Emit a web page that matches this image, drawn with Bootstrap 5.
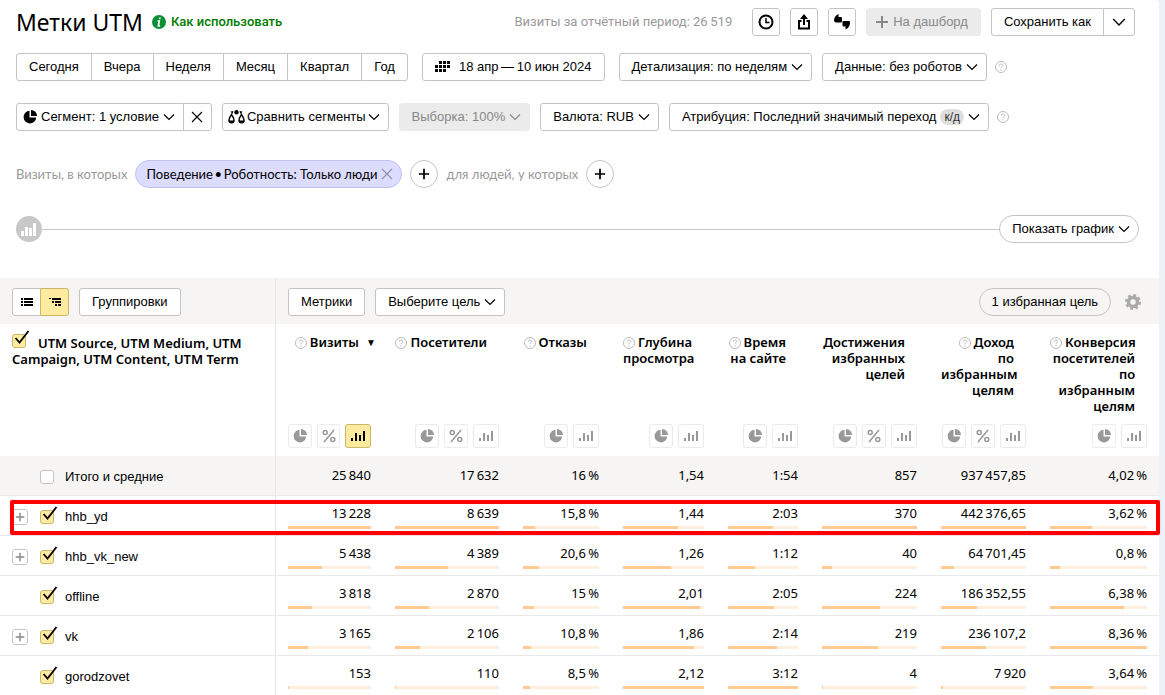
<!DOCTYPE html>
<html lang="ru">
<head>
<meta charset="utf-8">
<meta name="viewport" content="width=device-width, initial-scale=1">
<title>Метки UTM</title>
<link href="https://cdn.jsdelivr.net/npm/bootstrap@5.3.0/dist/css/bootstrap.min.css" rel="stylesheet">
<style>
  :root { --line: #c4c4c4; --pale: #f6f5f3; --yellow: #ffeba0; }
  body { font-family: "Noto Sans", sans-serif; font-size: 13px; line-height: 16px; color: #000; background: #eef1f7; padding-right: 6px; }
  .report { background: #fff; border-top-right-radius: 4px; }
  .report h1 { font-size: 23px; line-height: 28px; font-weight: 400; }
  .soft { font-family: Roboto, sans-serif; }
  .conditions { font-family: Lato, sans-serif; }
  .howto { color: #007a00; font-weight: 500; text-decoration: none; }
  .muted { color: #999; }
  .btn { --bs-btn-font-family: "Liberation Sans", sans-serif; --bs-btn-font-size: 13px; --bs-btn-line-height: 16px;
         --bs-btn-padding-x: 12px; --bs-btn-padding-y: 0; --bs-btn-border-radius: 3px; --bs-btn-border-color: var(--line);
         --bs-btn-bg: #fff; --bs-btn-color: #000; --bs-btn-active-bg: var(--yellow); --bs-btn-active-border-color: #cbb76c; --bs-btn-active-color: #000;
         --bs-btn-disabled-bg: #ebebeb; --bs-btn-disabled-border-color: #ebebeb; --bs-btn-disabled-color: #888; --bs-btn-disabled-opacity: 1;
         background: var(--bs-btn-bg); display: inline-flex; align-items: center; justify-content: center; height: 28px; white-space: nowrap; }
  .btn.caret { padding-right: 8px; gap: 4px; }
  .btn.lead-icon { padding-left: 6px; }
  .btn.compare { padding-left: 5px; gap: 2px; }
  .btn.square { width: 28px; padding: 0; }
  .btn.toggle { width: 29px; padding: 0; }
  .btn.round { border-radius: 14px; }
  .btn-group > .btn { flex: none; }
  .bar-gap { gap: 10px; }
  svg { display: block; flex: none; }
  .hint { color: #bbb; }
  .badge-kd { background: #dedede; color: #333; border-radius: 8px; font-size: 12px; line-height: 16px; padding: 0 4px; }
  .chip { background: #dcdcff; border: 1px solid #c3c1ef; border-radius: 14px; height: 28px; padding: 0 8px 0 10px; }
  .chip button { border: 0; background: none; padding: 0; color: #8f8fa8; }
  .chart-dot { width: 26px; height: 26px; border-radius: 50%; background: #c8c8c8; }
  .rule { height: 1px; background: #c8c8c8; }
  .grid { width: 100%; table-layout: fixed; border-collapse: separate; border-spacing: 0; }
  .grid th, .grid td { padding: 0 12px; vertical-align: top; }
  .grid th:first-child, .grid td:first-child { border-right: 1px solid #e6e6e6; text-align: left; }
  .tools > * { background: var(--pale); height: 46px; }
  .heads th { height: 132px; font-weight: 600; text-align: right; }
  .heads .in { height: 132px; padding: 10px 0 8px; }
  .heads .name { padding-right: 12px; white-space: nowrap; }
  .heads .tick { margin-right: 12px; }
  .name .hint { display: inline-block; vertical-align: -2px; margin-right: 3px; }
  .sorted { right: -5px; top: 0; font-size: 10px; }
  .mini { border: 1px solid #ebebeb; border-radius: 3px; background: #fff; color: #999; width: 24px; height: 24px; padding: 0; }
  .mini.wide { width: 26px; }
  .mini.on { background: var(--yellow); border-color: #cbb76c; color: #000; }
  .grid tbody td { height: 40px; border-bottom: 1px solid #e9e9e9; text-align: right; padding-top: 9px; }
  .grid tbody tr:last-child td { border-bottom: 0; height: 39px; }
  .grid tbody tr.total td { background: var(--pale); padding-top: 11px; }
  .grid tbody tr td:first-child, .grid tbody tr.total td:first-child { padding-top: 13px; font-family: "Liberation Sans", sans-serif; }
  .row-name { gap: 12px; }
  .row-name label { margin-left: -1px; }
  .plus { width: 16px; height: 16px; border: 1px solid #c4c4c4; border-radius: 3px; background: #fff; color: #888; padding: 0; }
  .tick { appearance: none; width: 14px; height: 14px; margin: 0; border: 1px solid #c4c4c4; border-radius: 3px; background: #fff; position: relative; flex: none; }
  .tick:checked { background: var(--yellow); border-color: #cbb76c; }
  .tick:checked::after { content: ""; position: absolute; left: 1px; top: -5px; width: 16px; height: 16px;
    background: url("data:image/svg+xml,%3Csvg xmlns='http://www.w3.org/2000/svg' viewBox='0 0 16 16'%3E%3Cpath d='M1.500 8 5.500 12.500 14.500 1' fill='none' stroke='%23000' stroke-width='1.800'/%3E%3C/svg%3E"); }
  .track { height: 3px; background: #ffefdf; margin-top: 5px; }
  .fill { height: 3px; min-width: 1px; background: #ffca94; }
  .marked { position: relative; }
  .marker { position: absolute; left: 10px; right: -1px; top: 4px; bottom: 1px; border: 4px solid #f00; border-radius: 2px; pointer-events: none; z-index: 2; box-shadow: 0 0 1px #f88; }
</style>
</head>
<body>
<svg width="0" height="0" class="position-absolute" aria-hidden="true">
  <symbol id="down" viewBox="0 0 12 12"><path d="M1 3.500 6 8.500l5-5" fill="none" stroke="currentColor" stroke-width="1.200"/></symbol>
  <symbol id="cross" viewBox="0 0 12 12"><path d="M1 1l10 10M11 1 1 11" fill="none" stroke="currentColor" stroke-width="1.100"/></symbol>
  <symbol id="add" viewBox="0 0 14 14"><path d="M7 1v12M1 7h12" stroke="currentColor" stroke-width="2"/></symbol>
  <symbol id="ask" viewBox="0 0 12 12"><circle cx="6" cy="6" r="5.500" fill="none" stroke="currentColor"/><path d="M4.300 4.800C4.300 2.400 7.700 2.500 7.700 4.600 7.700 5.800 6 5.800 6 7.200M6 8.200v1.200" fill="none" stroke="currentColor"/></symbol>
  <symbol id="pie" viewBox="0 0 14 14"><path d="M6.500.8A6.300 6.300 0 1 0 13.200 7.500H6.500z" fill="currentColor"/><path d="M8 0a6 6 0 0 1 6 6H8z" fill="currentColor"/></symbol>
  <symbol id="percent" viewBox="0 0 14 14"><g fill="none" stroke="currentColor" stroke-width="1.500"><path d="M12 1 2 13"/><circle cx="3.200" cy="3.500" r="2"/><circle cx="10.800" cy="10.500" r="2"/></g></symbol>
  <symbol id="bars" viewBox="0 0 14 12"><path d="M0 8h2v3H0zM4 3h2v8H4zM8 5h2v6H8zM12 1h2v10h-2z" fill="currentColor"/></symbol>
</svg>

<main class="report">
  <header class="d-flex align-items-center ps-3 pe-4 pt-2">
    <h1 class="m-0">Метки UTM</h1>
    <a href="#" class="howto soft d-flex align-items-center gap-1 ms-2">
      <svg width="16" height="16" viewBox="0 0 16 16"><circle cx="8" cy="8" r="7" fill="#0a8f35"/><path d="M8.800 3.500v1.800M6.500 7h1.700L7.400 12h1.700" fill="none" stroke="#fff" stroke-width="1.700"/></svg>
      Как использовать</a>
    <span class="muted soft ms-auto me-3 pe-1">Визиты за отчётный период: 26&#8201;519</span>
    <div class="d-flex bar-gap">
      <button class="btn square" aria-label="История"><svg width="16" height="16" viewBox="0 0 16 16" fill="none" stroke="#000" stroke-width="2"><circle cx="8" cy="8" r="6.500"/><path d="M8 4v4.500h3.500" stroke-width="1.500"/></svg></button>
      <button class="btn square" aria-label="Экспорт"><svg width="16" height="18" viewBox="0 0 16 18" fill="none" stroke="#000" stroke-width="2"><path d="M5.500 8H3v7.500h10V8h-2.500M8 12V3"/><path d="M4 6 8 1l4 5z" fill="#000" stroke="none"/></svg></button>
      <button class="btn square" aria-label="Комментарии"><svg width="16" height="16" viewBox="0 0 16 16"><path d="M4.500 0C2 1 0 3.500 0 6.500A2.200 2.200 0 0 0 2.200 8.500H7a1 1 0 0 0 1-1V4a1 1 0 0 0-1-1H4.500zM11.500 15.500C14 14.500 16 12 16 9V8a1 1 0 0 0-1-1H9.500a1 1 0 0 0-1 1v3.500a1 1 0 0 0 1 1h2z"/></svg></button>
      <button class="btn ps-2" disabled><svg width="14" height="14" class="me-1"><use href="#add"/></svg>На дашборд</button>
      <div class="btn-group">
        <button class="btn">Сохранить как</button>
        <button class="btn toggle" style="width:32px" aria-label="Ещё"><svg width="14" height="14"><use href="#down"/></svg></button>
      </div>
    </div>
  </header>

  <div class="d-flex align-items-center ps-3 bar-gap" style="padding-top:17px">
    <div class="btn-group me-1">
      <button class="btn">Сегодня</button><button class="btn">Вчера</button><button class="btn">Неделя</button><button class="btn">Месяц</button><button class="btn">Квартал</button><button class="btn">Год</button>
    </div>
    <button class="btn me-1"><svg width="16" height="12" viewBox="0 0 16 12" class="me-2"><path d="M4 0h3v3H4zM8 0h3v3H8zM12 0h3v3h-3zM0 4h3v3H0zM4 4h3v3H4zM8 4h3v3H8zM12 4h3v3h-3zM0 8h3v3H0zM4 8h3v3H4zM8 8h3v3H8z"/></svg>18 апр&#8201;—&#8201;10 июн 2024</button>
    <button class="btn caret">Детализация: по неделям<svg width="12" height="12"><use href="#down"/></svg></button>
    <div class="d-flex align-items-center gap-2">
      <button class="btn caret">Данные: без роботов<svg width="12" height="12"><use href="#down"/></svg></button>
      <svg class="hint" width="12" height="12"><use href="#ask"/></svg>
    </div>
  </div>

  <div class="d-flex align-items-center ps-3 bar-gap" style="padding-top:22px">
    <div class="btn-group">
      <button class="btn caret lead-icon"><svg width="14" height="14"><use href="#pie"/></svg>Сегмент: 1 условие<svg width="12" height="12"><use href="#down"/></svg></button>
      <button class="btn toggle" aria-label="Сбросить"><svg width="12" height="12"><use href="#cross"/></svg></button>
    </div>
    <button class="btn caret compare"><svg width="17" height="14" viewBox="0 0 17 14"><path d="M3.500 4.500C2.500 6.500 1 8 1 10.200a2.500 2.500 0 0 0 5 0C6 8 4.500 6.500 3.500 4.500zM13.500 4.500C12.500 6.500 11 8 11 10.200a2.500 2.500 0 0 0 5 0c0-2.200-1.500-3.700-2.500-5.700z" fill="none" stroke="#000" stroke-width="1.500"/><path d="M1 10.500h5v2H1zM11 10.500h5v2h-5zM2.500 1.500l3-.5-1 3zM14.500 1.500l-3-.5 1 3z"/><circle cx="8.500" cy="2.300" r="2.200"/></svg>Сравнить сегменты<svg width="12" height="12"><use href="#down"/></svg></button>
    <button class="btn caret" disabled>Выборка: 100%<svg width="12" height="12"><use href="#down"/></svg></button>
    <button class="btn caret">Валюта: RUB<svg width="12" height="12"><use href="#down"/></svg></button>
    <div class="d-flex align-items-center gap-2">
      <button class="btn caret">Атрибуция: Последний значимый переход<span class="badge-kd">к/д</span><svg width="12" height="12"><use href="#down"/></svg></button>
      <svg class="hint" width="12" height="12"><use href="#ask"/></svg>
    </div>
  </div>

  <div class="d-flex align-items-center gap-2 ps-3 conditions" style="padding-top:29px">
    <span class="muted">Визиты, в которых</span>
    <span class="chip d-flex align-items-center gap-1">Поведение&#8201;•&#8201;Роботность: Только люди<button aria-label="Удалить"><svg width="12" height="12"><use href="#cross"/></svg></button></span>
    <button class="btn square round" aria-label="Добавить условие"><svg width="12" height="12"><use href="#add"/></svg></button>
    <span class="muted">для людей, у которых</span>
    <button class="btn square round" aria-label="Добавить условие"><svg width="12" height="12"><use href="#add"/></svg></button>
  </div>

  <div class="d-flex align-items-center ps-3" style="padding-top:27px;padding-right:20px;padding-bottom:35px">
    <span class="chart-dot d-flex align-items-center justify-content-center"><svg width="16" height="14" viewBox="0 0 16 14" fill="#fff"><path d="M0 9h3v5H0zM4 5h3v9H4zM8 6h3v8H8zM12 1h3v13h-3z"/></svg></span>
    <span class="rule flex-grow-1"></span>
    <button class="btn caret round">Показать график<svg width="12" height="12"><use href="#down"/></svg></button>
  </div>

  <table class="grid">
    <colgroup id="cols"></colgroup>
    <thead>
      <tr class="tools">
        <td><div class="d-flex bar-gap" style="padding-top:10px">
          <div class="btn-group">
            <button class="btn toggle" aria-label="Список"><svg width="12" height="10" viewBox="0 0 12 10"><path d="M0 1h2v2H0zM3 1h9v2H3zM0 4h2v2H0zM3 4h9v2H3zM0 7h2v2H0zM3 7h9v2H3z"/></svg></button>
            <button class="btn toggle active" aria-label="Дерево"><svg width="12" height="10" viewBox="0 0 12 10"><path d="M0 1h2v1H0zM3 1h9v2H3zM3 4h2v2H3zM6 4h6v2H6zM6 7h2v2H6zM9 7h3v2H9z"/></svg></button>
          </div>
          <button class="btn">Группировки</button>
        </div></td>
        <td colspan="8"><div class="d-flex align-items-center bar-gap" style="padding-top:10px;padding-right:6px">
          <button class="btn">Метрики</button>
          <button class="btn caret">Выберите цель<svg width="12" height="12"><use href="#down"/></svg></button>
          <button class="btn round ms-auto bg-transparent">1 избранная цель</button>
          <svg class="ms-1" width="16" height="16" viewBox="-8 -8 16 16" fill="none" stroke="#aaa"><circle r="4.500" stroke-width="3.500"/><circle r="6.700" stroke-width="2.600" stroke-dasharray="2.800 2.460"/></svg>
        </div></td>
      </tr>
      <tr class="heads" id="heads"></tr>
    </thead>
    <tbody id="rows"></tbody>
  </table>
</main>

<script>
  const icon = (id, w = 14, h = w) => `<svg width="${w}" height="${h}"><use href="#${id}"/></svg>`;
  const metrics = [
    { name: 'Визиты', w: 107, pct: true, sorted: true },
    { name: 'Посетители', w: 128, pct: true },
    { name: 'Отказы', w: 100, max: 100 },
    { name: 'Глубина<br>просмотра', w: 105 },
    { name: 'Время<br>на сайте', w: 94 },
    { name: 'Достижения<br>избранных<br>целей', w: 119, pct: true, plain: true },
    { name: 'Доход<br>по<br>избранным<br>целям', w: 109, pct: true },
    { name: 'Конверсия<br>посетителей<br>по<br>избранным<br>целям', w: 121 }
  ];
  const rows = [
    ['hhb_yd', true, '13 228', '8 639', '15,8 %', '1,44', '2:03', '370', '442 376,65', '3,62 %'],
    ['hhb_vk_new', true, '5 438', '4 389', '20,6 %', '1,26', '1:12', '40', '64 701,45', '0,8 %'],
    ['offline', false, '3 818', '2 870', '15 %', '2,01', '2:05', '224', '186 352,55', '6,38 %'],
    ['vk', true, '3 165', '2 106', '10,8 %', '1,86', '2:14', '219', '236 107,2', '8,36 %'],
    ['gorodzovet', false, '153', '110', '8,5 %', '2,12', '3:12', '4', '7 920', '3,64 %']
  ];
  const total = ['25 840', '17 632', '16 %', '1,54', '1:54', '857', '937 457,85', '4,02 %'];
  const thin = s => s.replace(/ /g, '\u2009');
  const num = s => s.includes(':') ? s.split(':').reduce((m, x) => m * 60 + +x, 0) : parseFloat(s.replace(/ /g, '').replace(',', '.'));
  const max = metrics.map((m, i) => m.max || Math.max(...rows.map(r => num(r[i + 2]))));

  document.getElementById('cols').innerHTML = '<col style="width:276px">' + metrics.map(m => `<col style="width:${m.w}px">`).join('');
  document.getElementById('heads').innerHTML =
    `<th><div class="in"><input type="checkbox" class="tick" id="all" checked><label for="all" class="d-inline">UTM Source, UTM Medium, UTM Campaign, UTM Content, UTM Term</label></div></th>` +
    metrics.map(m => `<th><div class="in d-flex flex-column justify-content-between">
      <div class="name position-relative">${m.plain ? '' : `<span class="hint">${icon('ask', 12)}</span>`}${m.name}${m.sorted ? '<span class="sorted position-absolute">▼</span>' : ''}</div>
      <div class="d-flex justify-content-end" style="gap:5px">
        <button class="mini d-flex align-items-center justify-content-center" aria-label="Круговая">${icon('pie')}</button>
        ${m.pct ? `<button class="mini d-flex align-items-center justify-content-center" aria-label="Проценты">${icon('percent')}</button>` : ''}
        <button class="mini wide d-flex align-items-center justify-content-center ${m.sorted ? 'on' : ''}" aria-label="Столбцы">${icon('bars', 14, 12)}</button>
      </div></div></th>`).join('');
  const first = (id, text, plus, checked) => `<div class="row-name d-flex align-items-center">
      ${plus ? `<button class="plus d-flex align-items-center justify-content-center" aria-label="Раскрыть">${icon('add', 10)}</button>` : '<span style="width:16px"></span>'}
      <input type="checkbox" class="tick" id="${id}" ${checked ? 'checked' : ''}><label for="${id}">${text}</label></div>`;
  document.getElementById('rows').innerHTML =
    `<tr class="total"><td>${first('sum', 'Итого и средние', false, false)}</td>${total.map(t => `<td>${thin(t)}</td>`).join('')}</tr>` +
    rows.map((r, k) => `<tr class="${k ? '' : 'marked'}"><td>${first('r' + k, r[0], r[1], true)}${k ? '' : '<div class="marker"></div>'}</td>` +
      r.slice(2).map((v, i) => `<td>${thin(v)}<div class="track"><div class="fill" style="width:${Math.round(num(v) / max[i] * 100)}%"></div></div></td>`).join('') + '</tr>').join('');
</script>
<script src="https://cdn.jsdelivr.net/npm/bootstrap@5.3.0/dist/js/bootstrap.bundle.min.js"></script>
</body>
</html>
